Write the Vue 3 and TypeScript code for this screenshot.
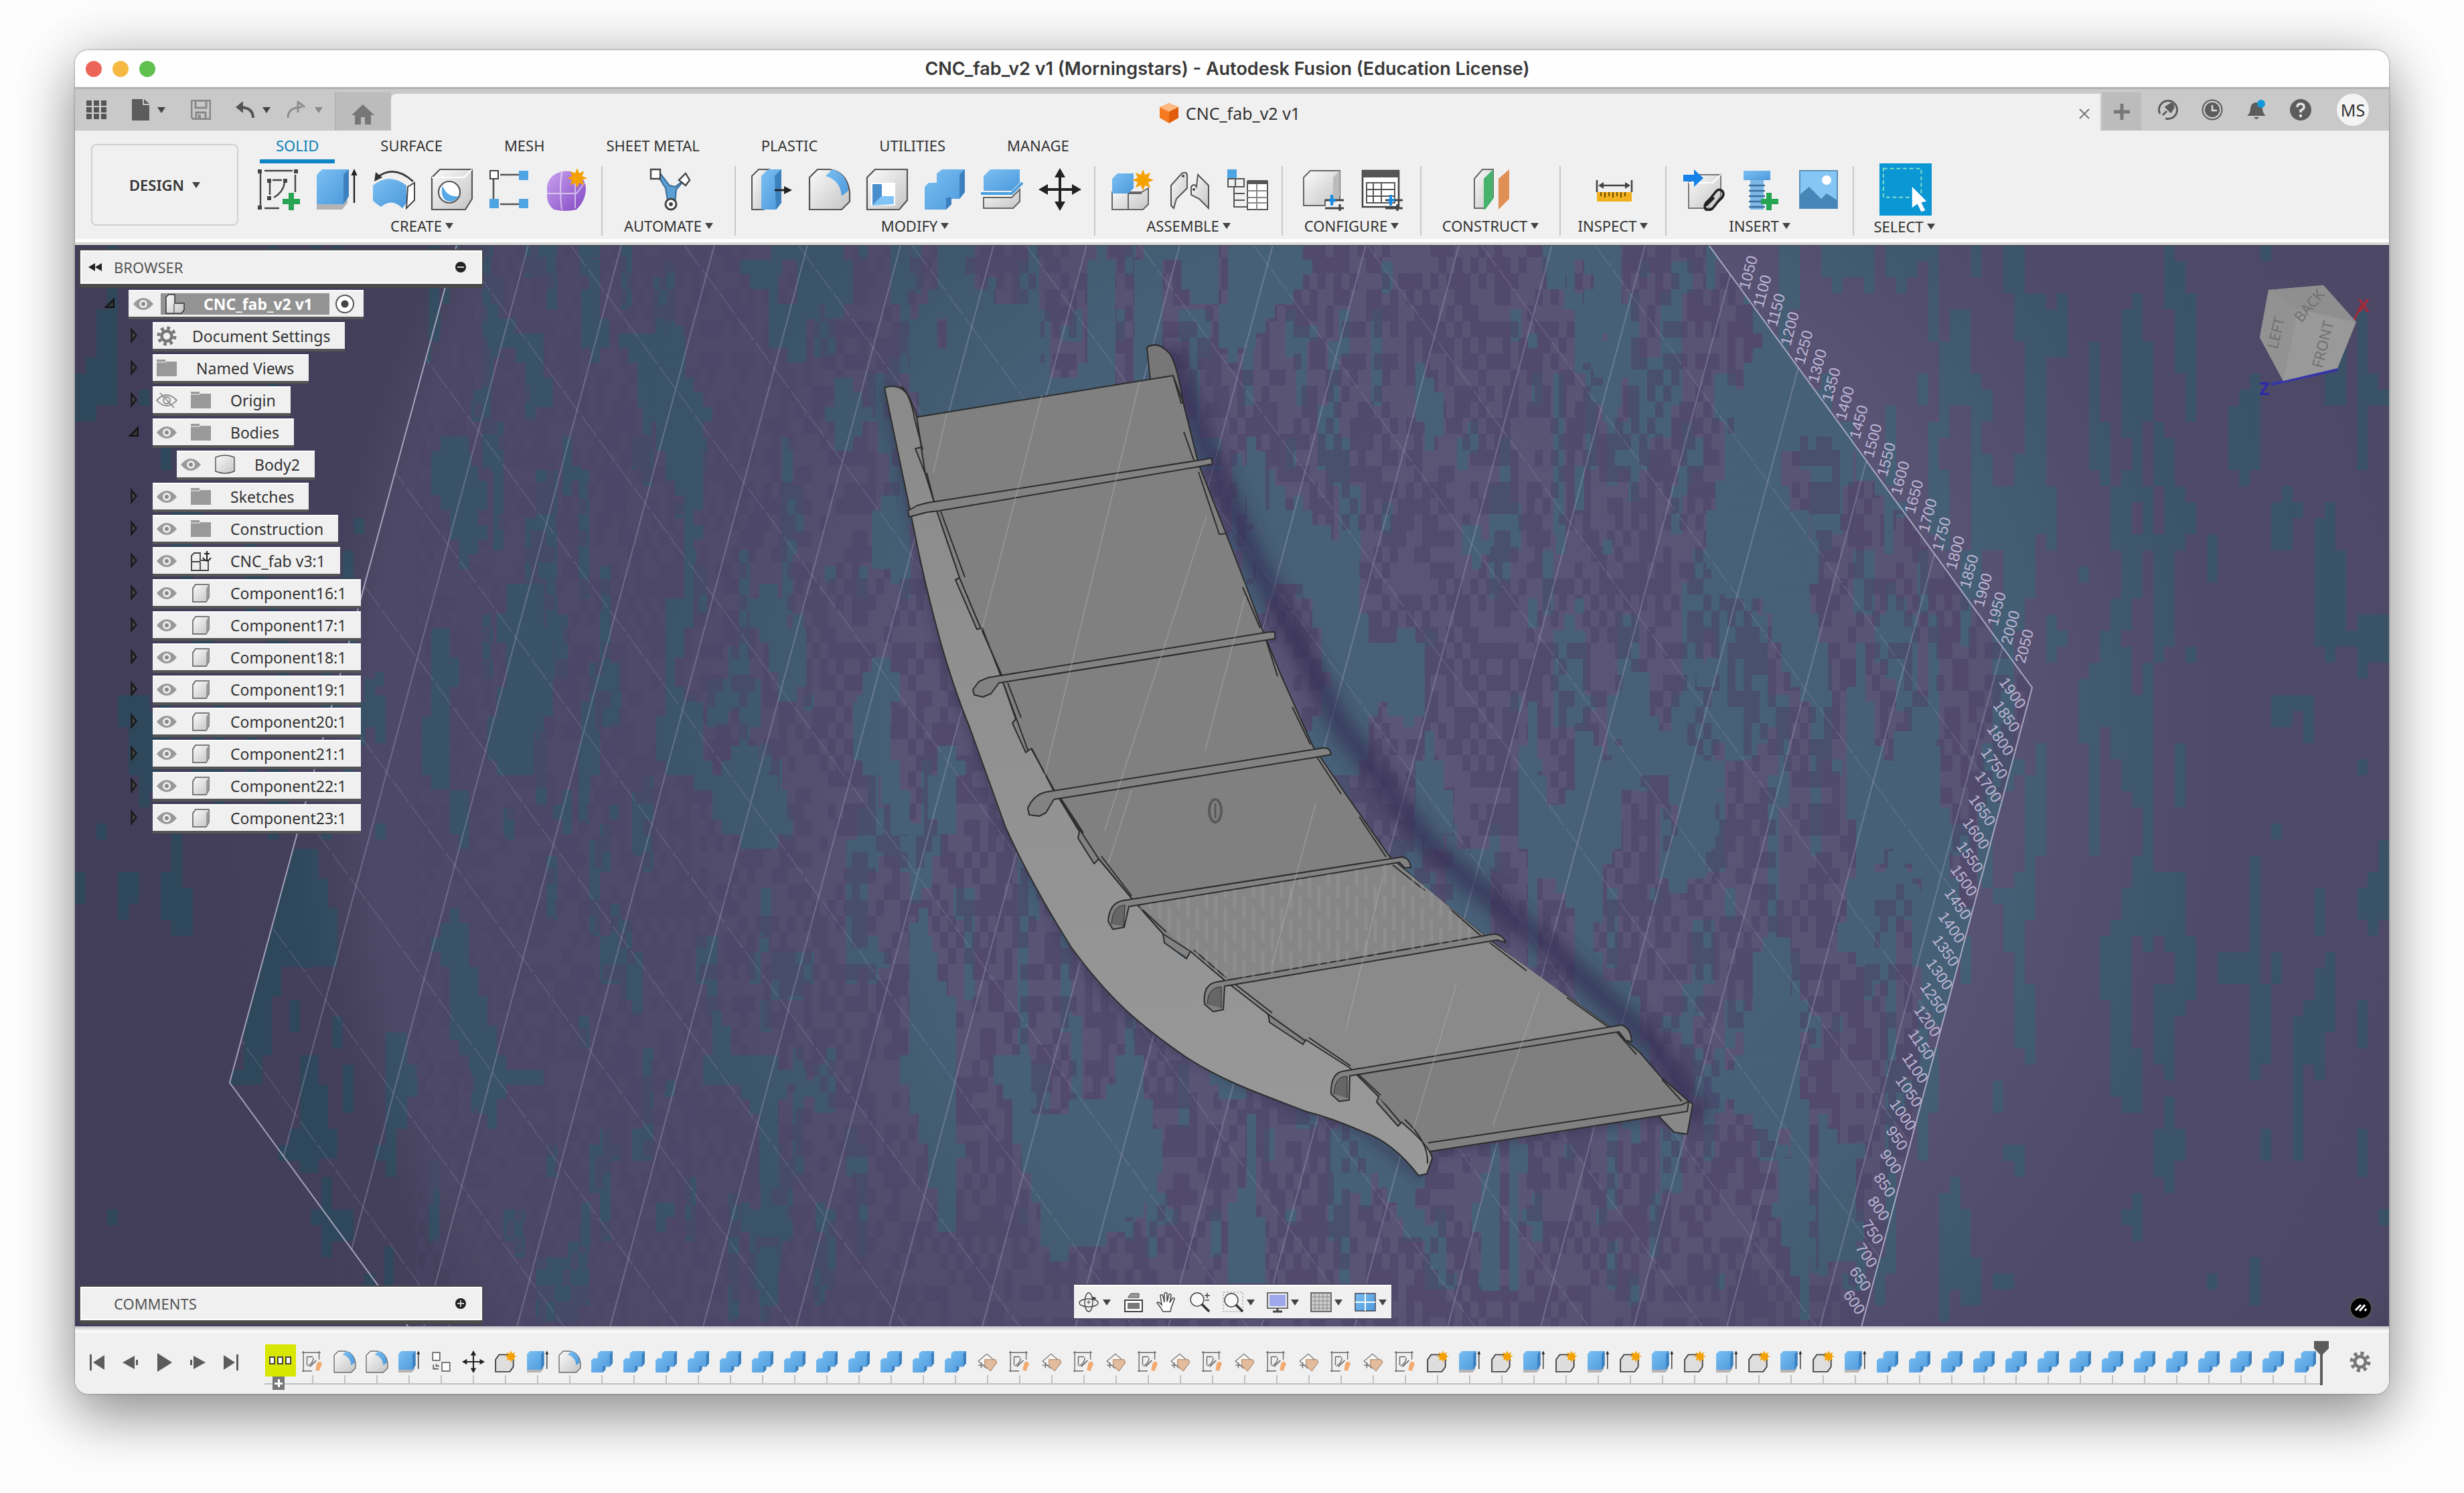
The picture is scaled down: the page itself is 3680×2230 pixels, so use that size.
<script setup lang="ts">
interface TreeRow { label: string; depth: number; expander: 'open' | 'closed' | 'none'; eye: 'on' | 'off' | 'none'; icon: string }
interface Group { label: string; width: number; icons: string[] }

const tabs = ['SOLID', 'SURFACE', 'MESH', 'SHEET METAL', 'PLASTIC', 'UTILITIES', 'MANAGE']

const groups: Group[] = [
  { label: 'CREATE', width: 538, icons: ['sketch-new', 'extrude', 'revolve', 'hole', 'pattern', 'form'] },
  { label: 'AUTOMATE', width: 199, icons: ['automate'] },
  { label: 'MODIFY', width: 537, icons: ['presspull', 'fillet', 'shell', 'combine', 'split', 'move'] },
  { label: 'ASSEMBLE', width: 280, icons: ['newcomp', 'joint', 'bom'] },
  { label: 'CONFIGURE', width: 207, icons: ['config', 'configtable'] },
  { label: 'CONSTRUCT', width: 208, icons: ['plane'] },
  { label: 'INSPECT', width: 158, icons: ['measure'] },
  { label: 'INSERT', width: 280, icons: ['insert', 'bolt', 'picture'] },
  { label: 'SELECT', width: 150, icons: ['select'] },
]

const tree: TreeRow[] = [
  { label: 'Document Settings', depth: 1, expander: 'closed', eye: 'none', icon: 'gear' },
  { label: 'Named Views', depth: 1, expander: 'closed', eye: 'none', icon: 'folder' },
  { label: 'Origin', depth: 1, expander: 'closed', eye: 'off', icon: 'folder' },
  { label: 'Bodies', depth: 1, expander: 'open', eye: 'on', icon: 'folder' },
  { label: 'Body2', depth: 2, expander: 'none', eye: 'on', icon: 'body' },
  { label: 'Sketches', depth: 1, expander: 'closed', eye: 'on', icon: 'folder' },
  { label: 'Construction', depth: 1, expander: 'closed', eye: 'on', icon: 'folder' },
  { label: 'CNC_fab v3:1', depth: 1, expander: 'closed', eye: 'on', icon: 'anchored' },
  ...Array.from({ length: 8 }, (_, i): TreeRow => ({
    label: `Component${16 + i}:1`, depth: 1, expander: 'closed', eye: 'on', icon: 'component',
  })),
]

const repeat = (items: string[], n: number): string[] => Array.from({ length: n }, () => items).flat()
const timeline: string[] = [
  'tl-group', 'tl-sketch', 'fillet', 'fillet', 'extrude', 'tl-copy', 'move', 'tl-comp', 'extrude', 'fillet',
  ...repeat(['combine'], 12),
  ...repeat(['tl-plane', 'tl-sketch'], 7),
  ...repeat(['tl-comp', 'extrude'], 7),
  ...repeat(['combine'], 14),
]

const navTools = [
  { name: 'Orbit', icon: 'nav-orbit', menu: true },
  { name: 'Look at', icon: 'nav-look', menu: false },
  { name: 'Pan', icon: 'nav-hand', menu: false },
  { name: 'Zoom', icon: 'nav-zoom', menu: false },
  { name: 'Fit', icon: 'nav-fit', menu: true },
  { name: 'Display settings', icon: 'nav-display', menu: true },
  { name: 'Grid and snaps', icon: 'nav-grid', menu: true },
  { name: 'Viewports', icon: 'nav-views', menu: true },
]

// Scale labels along the two visible borders of the work plane.
const upperScale = Array.from({ length: 21 }, (_, k) => ({ value: 2050 - 50 * k, x: 3023 - 20.6 * k, y: 965 - 27.9 * k }))
const lowerScale = Array.from({ length: 27 }, (_, k) => ({ value: 1900 - 50 * k, x: 3006 - 9.1 * k, y: 1035 + 35 * k }))

// Work plane grid: steep lines and shallow lines, both through the full viewport height.
const steep = Array.from({ length: 26 }, (_, k) => { const x = 1345 + 139 * (k - 8); return `M${x} 366L${x - 434} 1982` }).join('')
const shallow = Array.from({ length: 20 }, (_, k) => { const x = 2552 - 170 * (k + 1); return `M${x} 366L${x + 1181} 1982` }).join('')

// Seeded value noise gives the mottled backdrop the same look on every load.
const hash = (x: number, y: number): number => {
  let h = (x * 374761393 + y * 668265263) | 0
  h = Math.imul(h ^ (h >>> 13), 1274126177)
  return ((h ^ (h >>> 16)) >>> 0) / 4294967295
}
const noise = (x: number, y: number): number => {
  const xi = Math.floor(x), yi = Math.floor(y)
  const u = x - xi, v = y - yi
  const a = hash(xi, yi) * (1 - u) + hash(xi + 1, yi) * u
  const b = hash(xi, yi + 1) * (1 - u) + hash(xi + 1, yi + 1) * u
  return a * (1 - v) + b * v
}
const cells = (w: number, h: number, x1: number, x2: number, y1: number, y2: number, hit: (x: number, y: number) => boolean): string => {
  let d = ''
  for (let x = x1; x < x2; x += w) {
    let start = -1
    for (let y = y1; y <= y2; y += h) {
      const on = y < y2 && hit(x, y)
      if (on && start < 0) start = y
      if (!on && start >= 0) { d += `M${x} ${start}h${w}V${y}h-${w}z`; start = -1 }
    }
  }
  return d
}
const checks = cells(12, 24, 0, 480, 0, 480, (x, y) => hash(x + 7, y + 3) + ((x / 12 + y / 24) % 2 ? 0.3 : 0) > 0.66)
const patches = cells(14, 22, 112, 3568, 366, 1982, (x, y) => {
  const t = noise((x - y * 0.2) / 100 + 40, y / 190) * 0.5 + noise(x / 38, y / 100 + 9) * 0.5
  const d = Math.hypot((x - 2150) / 1500, (y - 1150) / 1500)
  return t > 0.54 + d * 0.07
})
const strips = cells(16, 24, 112, 3568, 366, 1982, (x, y) => {
  const t = noise(x / 20 + 5, y / 95 + 2) * 0.68 + noise((x - y * 0.2) / 150, y / 260 + 30) * 0.32
  return t > (x < 700 ? 0.72 : 0.63)
})
const bars = [
  'M1385 751L1800 686L1809 684L1811 693L1785 698L1402 763L1385 765L1358 772L1356 763L1370 755Z',
  'M1476 1012L1895 944L1904 944L1904 954L1492 1020L1480 1036L1468 1041L1455 1038L1453 1030L1462 1018Z',
  'M1562 1183L1977 1117Q1987 1117 1988 1127L1972 1130L1574 1194L1562 1214L1552 1219L1537 1217L1535 1207Q1544 1187 1562 1183Z',
  'M1678 1345L2094 1280Q2106 1282 2107 1296L2098 1296L2090 1288L1686 1354L1679 1385L1662 1388L1655 1376Q1657 1348 1678 1345Z',
  'M1816 1467L2232 1395Q2244 1396 2249 1408L2236 1404L1829 1473L1827 1508L1812 1511L1799 1500Q1796 1471 1816 1467Z',
  'M2006 1600L2422 1531Q2436 1536 2437 1556L2428 1554L2418 1541L2016 1607L2015 1643L2000 1645L1988 1634Q1987 1603 2006 1600Z',
]
</script>

<template>
  <svg class="defs" aria-hidden="true">
    <defs>
      <linearGradient id="blue" x1="0" y1="0" x2="1" y2="1"><stop offset="0" stop-color="#7cc0f2" /><stop offset="1" stop-color="#4b98dc" /></linearGradient>
      <linearGradient id="grey" x1="0" y1="0" x2="1" y2="1"><stop offset="0" stop-color="#fbfbfb" /><stop offset="1" stop-color="#c4c4c4" /></linearGradient>
      <linearGradient id="violet" x1="0" y1="0" x2="1" y2="1"><stop offset="0" stop-color="#c9a3ee" /><stop offset="1" stop-color="#8247c4" /></linearGradient>
    </defs>
    <symbol id="star" viewBox="0 0 16 16"><path d="M8 0l1.6 4.1L13.600 2.400 11.900 6.400 16 8l-4.100 1.600 1.700 4-4-1.700L8 16l-1.600-4.100-4 1.700 1.700-4L0 8l4.100-1.600-1.700-4 4 1.700z" fill="#f5a100" /></symbol>
    <symbol id="sketch-new" viewBox="0 0 32 32"><path d="M2 4v24M5 2h21M28 5v13M5 30h11M11 9h7M9 11v9M20 11q-1 7-8 11" fill="none" stroke="#444" stroke-width="1.200" /><path d="M0 1h3v3H0zM27 1h3v3h-3zM0 28h3v3H0zM7 8h3v3H7zM19 8h3v3h-3zM7 21h3v3H7z" fill="#444" /><path d="M23 18.500h4v4.500h4.500v4H27v4.500h-4V27h-4.500v-4H23z" fill="#27a454" /></symbol>
    <symbol id="extrude" viewBox="0 0 32 32"><path d="M1 27l3-2h17l3-5v6l-4 5H1z" fill="#b4b4b4" /><path d="M1 5l4-4h20v20l-4 6H1z" fill="url(#blue)" /><path d="M21 5l4-4v20l-4 6z" fill="#3c80bd" /><path d="M29 26V5" stroke="#222" stroke-width="1.200" /><path d="M29 0.500l2.300 5h-4.600z" fill="#222" /></symbol>
    <symbol id="revolve" viewBox="0 0 32 32"><path d="M0 13q12-10 25 0v13l-3 4q-8-8-16-1-6-4-6-5z" fill="url(#blue)" /><path d="M26 14l5-3v13l-6 6z" fill="#fff" stroke="#444" /><path d="M3 7q13-10 27 3" fill="none" stroke="#333" stroke-width="1.300" /><path d="M1 10l1-7 5 4z" fill="#333" /></symbol>
    <symbol id="hole" viewBox="0 0 32 32"><path d="M1 7l6-6h24v22l-5 8H1z" fill="url(#grey)" stroke="#555" stroke-width="1.100" /><path d="M1 7h24l6-6" fill="none" stroke="#fff" /><circle cx="14" cy="18" r="8" fill="#fff" stroke="#555" stroke-width="1.100" /><path d="M9 13q3 9 12 8-4 6-10 3-4-4-2-11z" fill="#58a9e8" /></symbol>
    <symbol id="pattern" viewBox="0 0 32 32"><path d="M4 8v17M9 5h14M9 27h14" stroke="#555" stroke-width="1.300" /><path d="M1.500 2h6v6h-6z" fill="#fff" stroke="#444" /><path d="M23 2h7v7h-7zM1 23h7v7H1zM23 23h7v7h-7z" fill="#4fa4e4" /></symbol>
    <symbol id="form" viewBox="0 0 32 32"><path d="M8 4q8-4 16 1 6 4 6 10 0 9-7 16-8 2-17 0-5-4-5-10V14Q2 7 8 4z" fill="url(#violet)" /><path d="M1 19h22l6-8M12 3q-2 14 0 28M22 8v22" fill="none" stroke="#fff" stroke-opacity=".55" /><use href="#star" x="16" y="0" width="15" height="15" /></symbol>
    <symbol id="automate" viewBox="0 0 32 32"><path d="M6 4l7 11 2 12h5l1-11 6-7-7 5-4-1-7-9z" fill="#5b9fd4" stroke="#3a6a94" /><path d="M2 1h7v7H2zM28 4l3 5-3 4-5-4z" fill="#fff" stroke="#444" stroke-width="1.200" /><circle cx="17" cy="27" r="4" fill="#fff" stroke="#444" stroke-width="1.500" /><circle cx="17" cy="27" r="1.500" fill="#444" /></symbol>
    <symbol id="presspull" viewBox="0 0 32 32"><path d="M1 6l5-5h8v25l-4 5H1z" fill="url(#grey)" stroke="#555" /><path d="M8 6l5-5h10v25l-4 5H8z" fill="url(#blue)" /><path d="M18 6l5-5v25l-4 5z" fill="#3c80bd" /><path d="M18 16.500h8" stroke="#222" stroke-width="1.500" /><path d="M31 16.500l-6-3v6z" fill="#222" /></symbol>
    <symbol id="fillet" viewBox="0 0 32 32"><path d="M1 7l6-6h9q13 2 15 17v7l-6 6H1z" fill="url(#grey)" stroke="#555" stroke-width="1.100" /><path d="M13 6l5-5q11 3 12 16l-5 4Q24 9 13 6z" fill="url(#blue)" /></symbol>
    <symbol id="shell" viewBox="0 0 32 32"><path d="M1 7l6-6h24v23l-6 7H1z" fill="url(#grey)" stroke="#555" stroke-width="1.100" /><path d="M4 11h18v17H4z" fill="#fff" /><path d="M5 12h7v9l-7 7z" fill="#4a8fcd" /><path d="M5 28l7-7h9v6z" fill="#7fc4f5" /></symbol>
    <symbol id="combine" viewBox="0 0 32 32"><path d="M1 14l3-3h6V4l4-3h17v17l-4 5h-6v4l-4 4H1z" fill="url(#blue)" /><path d="M27 5l4-4v17l-4 5zM17 22h4v5l-4 4z" fill="#3c80bd" /></symbol>
    <symbol id="split" viewBox="0 0 32 32"><path d="M2 6l5-5h22v10l-6 6H2z" fill="url(#blue)" /><path d="M2 22h21l6-6v9l-5 5H2z" fill="url(#grey)" stroke="#666" /><path d="M0 19h23l8-8" fill="none" stroke="#4a9fe0" stroke-width="2" /></symbol>
    <symbol id="move" viewBox="0 0 32 32"><path d="M16 5v22M5 16h22" stroke="#222" stroke-width="2" /><path d="M16 0l4 7h-8zM16 32l4-7h-8zM0 16l7-4v8zM32 16l-7-4v8z" fill="#222" /></symbol>
    <symbol id="newcomp" viewBox="0 0 32 32"><path d="M1 18h22l5-3v12l-4 4H1z" fill="url(#grey)" stroke="#666" /><path d="M13 19v12M13 19h10" stroke="#666" /><path d="M1 8l4-4h12v11l-4 4H1z" fill="url(#blue)" /><use href="#star" x="16" y="1" width="16" height="16" /></symbol>
    <symbol id="joint" viewBox="0 0 32 32"><path d="M2 13l8-9q4-2 4 2v9l-8 8-2 7-2-2z" fill="url(#grey)" stroke="#555" /><path d="M17 14q2-3 4 0l1-9 8 8v17l-7-7-6-3z" fill="url(#grey)" stroke="#555" /><circle cx="11" cy="6" r="1" fill="#444" /><circle cx="19" cy="16" r="1" fill="#444" /></symbol>
    <symbol id="bom" viewBox="0 0 32 32"><path d="M1 1h7v7H1z" fill="#4fa4e4" /><path d="M1.500 8h12v6h-12zM7 8v6M6 14v15h10M6 19h8M6 24h8" fill="none" stroke="#555" /><path d="M16 10h15v21H16z" fill="#fff" stroke="#555" /><path d="M16 9h15v3H16z" fill="#555" /><path d="M16 17h15M16 22h15M16 26h15M23 12v19" stroke="#888" /></symbol>
    <symbol id="config" viewBox="0 0 32 32"><path d="M1 7l5-5h22v22H17v4H1z" fill="url(#grey)" stroke="#666" /><path d="M23 7l5-5v19l-5 6z" fill="#bbb" /><path d="M17 24h14M17 30h14M28 27v5" stroke="#444" stroke-width="1.600" /><path d="M22 20v8M20 24h5" stroke="#188be0" stroke-width="2" /></symbol>
    <symbol id="configtable" viewBox="0 0 32 32"><path d="M2 2h27v27H2z" fill="#fff" stroke="#444" stroke-width="1.300" /><path d="M2 2h27v5H2z" fill="#555" /><path d="M5 11h21v15H5zM5 16h21M5 21h21M10 11v15M16 11v15" fill="none" stroke="#555" /><path d="M19 24h13M19 30h13M28 27v5" stroke="#444" stroke-width="1.600" /><path d="M23 20v8M21 24h5" stroke="#188be0" stroke-width="2" /></symbol>
    <symbol id="plane" viewBox="0 0 32 32"><path d="M3 8l6-7h8v21l-6 8H3z" fill="url(#grey)" stroke="#666" /><path d="M10 8l7-7v22l-6 8h-1z" fill="#47b26b" /><path d="M21 8l8-7v22l-8 8z" fill="#e08f55" /></symbol>
    <symbol id="measure" viewBox="0 0 32 32"><path d="M3 9v9M29 9v9M5 13h22" stroke="#444" stroke-width="1.300" /><path d="M4 13l4-2.500v5zM28 13l-4-2.500v5z" fill="#444" /><path d="M3 18h26v7H3z" fill="#f2b01e" /><path d="M6 18v3M9 18v4M12 18v3M15 18v4M18 18v3M21 18v4M24 18v3" stroke="#6b4c00" /></symbol>
    <symbol id="insert" viewBox="0 0 32 32"><path d="M5 11l6-6h18v16l-6 9H5z" fill="url(#grey)" stroke="#777" /><path d="M5 11h18l6-6" fill="none" stroke="#fff" /><path d="M1 5h8V1l7 6.500L9 14v-4H1z" fill="#1482e6" /><path d="M21 23l4-5q2-3 5-1 2 2 0 5l-4 4M24 22l-6 6M23 21l-5 5q-2 3 0 5 3 1 5-1l4-5" fill="none" stroke="#222" stroke-width="1.800" /></symbol>
    <symbol id="bolt" viewBox="0 0 32 32"><path d="M3 2h20v7H3z" fill="url(#blue)" /><path d="M8 9h10v22H8z" fill="#7db8e6" /><path d="M7 13h12M7 17h12M7 21h12M7 25h12M7 29h12" stroke="#3a6d9a" stroke-width="1.300" /><path d="M20 18.500h4V23h5v4h-5v4.500h-4V27h-4v-4h4z" fill="#27a454" /></symbol>
    <symbol id="picture" viewBox="0 0 32 32"><path d="M2 2h28v28H2z" fill="#86c6f5" stroke="#5b8fb8" /><path d="M2 30V20l7-6 9 9 4-4 8 5v6z" fill="#4787b8" /><circle cx="22" cy="9" r="3.500" fill="#fff" /></symbol>
    <symbol id="select" viewBox="0 0 40 40"><path d="M0 0h40v40H0z" fill="#0b96d4" /><path d="M3 4h29v22H3z" fill="none" stroke="#7fe0c8" stroke-width="1" stroke-dasharray="3 2" /><path d="M25 18v16l4-3 3 6 3-1-3-6 4-1z" fill="#fff" /></symbol>
    <symbol id="gear" viewBox="0 0 32 32"><circle cx="16" cy="16" r="12" fill="none" stroke="#777" stroke-width="5" stroke-dasharray="4.700 4.720" /><circle cx="16" cy="16" r="7.500" fill="none" stroke="#777" stroke-width="4.500" /></symbol>
    <symbol id="folder" viewBox="0 0 32 32"><path d="M1 3h13v3h17v22H1z" fill="#999" /><path d="M1 7h13l2-2" fill="none" stroke="#d6d6d6" stroke-width="1.500" /></symbol>
    <symbol id="eye" viewBox="0 0 32 32"><path d="M1 16Q16-2 31 16 16 34 1 16z" fill="#999" /><circle cx="16" cy="16" r="6" fill="#eee" /><circle cx="16" cy="16" r="3" fill="#888" /></symbol>
    <symbol id="eye-off" viewBox="0 0 32 32"><path d="M1 16Q16 0 31 16 16 32 1 16zM6 5l21 22" fill="none" stroke="#888" stroke-width="1.800" /><circle cx="16" cy="16" r="5" fill="none" stroke="#888" stroke-width="1.800" /></symbol>
    <symbol id="body" viewBox="0 0 32 32"><path d="M2 5q14-6 28 0v21q-14 6-28 0z" fill="url(#grey)" stroke="#555" stroke-width="1.500" /></symbol>
    <symbol id="component" viewBox="0 0 32 32"><path d="M4 9l4-6h20v19l-4 7H4z" fill="url(#grey)" stroke="#555" stroke-width="1.500" /><path d="M24 9l4-6v19l-4 7z" fill="#999" /></symbol>
    <symbol id="anchored" viewBox="0 0 32 32"><path d="M2 8l4-4h9v11h12v15H2zM2 17h13M15 17v13" fill="#eee" stroke="#444" stroke-width="1.800" /><path d="M25 1v15M21 5h8M19 11q6 9 12 0" fill="none" stroke="#222" stroke-width="2" /></symbol>
    <symbol id="assembly" viewBox="0 0 32 32"><path d="M2 6l4-4h9v13h14v10l-4 5H2z" fill="url(#grey)" stroke="#333" stroke-width="1.500" /><path d="M14 16v13" stroke="#333" /></symbol>
    <symbol id="tl-group" viewBox="0 0 46 48"><path d="M0 0h46v48H0z" fill="#d9e600" /><path d="M7 19h7v10H7zM19 19h7v10h-7zM31 19h7v10h-7z" fill="#fff" stroke="#444" stroke-width="2" /></symbol>
    <symbol id="tl-sketch" viewBox="0 0 32 32"><path d="M3 1v29M1 3h26M25 1v12M1 29h14M8 9v12M8 9h8M17 10q0 8-8 12" fill="none" stroke="#666" stroke-width="1.300" /><path d="M20 28l2-10q5-5 7 1l-4 10z" fill="#f2aa70" /><path d="M12 23l9-9" stroke="#666" stroke-width="1.500" /></symbol>
    <symbol id="tl-copy" viewBox="0 0 32 32"><path d="M4 3h10v11H4zM17 17h11v12H17z" fill="#fff" stroke="#666" stroke-width="1.600" /><path d="M5 20v6h7M9 19v3h4" fill="none" stroke="#555" stroke-width="1.600" /></symbol>
    <symbol id="tl-comp" viewBox="0 0 32 32"><path d="M2 13l5-7h20v17l-5 7H2z" fill="#dedede" stroke="#444" stroke-width="1.800" /><use href="#star" x="15" y="0" width="17" height="17" /></symbol>
    <symbol id="tl-plane" viewBox="0 0 32 32"><path d="M3 15L15 5l9 8-10 12z" fill="#f8f4f0" stroke="#777" stroke-width="1.200" /><path d="M12 13h15l2 4-9 12-8-7z" fill="#e3bb9d" stroke="#a5856c" /><path d="M7 17v8M3 21h8" stroke="#777" stroke-width="1.500" /></symbol>
    <symbol id="nav-orbit" viewBox="0 0 32 32"><ellipse cx="15" cy="17" rx="14" ry="6" fill="none" stroke="#444" stroke-width="1.400" /><ellipse cx="15" cy="16" rx="6" ry="14" fill="none" stroke="#444" stroke-width="1.400" /><path d="M12 16h6M15 13v6M21 8l5 2-4 3z" stroke="#444" fill="#444" /></symbol>
    <symbol id="nav-look" viewBox="0 0 32 32"><path d="M3 13h26v17H3z" fill="#fff" stroke="#444" stroke-width="2" /><path d="M7 17h18v9H7z" fill="#777" /><path d="M8 8l4-5h12v6H8z" fill="#999" stroke="#555" /></symbol>
    <symbol id="nav-hand" viewBox="0 0 32 32"><path d="M11 30q-3-6-9-13 2-3 7 3L7 6q2-3 4 1l2 9V3q3-3 4 0v12l3-11q3-1 3 2l-2 11 4-7q3-1 3 1l-5 14-1 5z" fill="#fff" stroke="#444" stroke-width="1.500" /></symbol>
    <symbol id="nav-zoom" viewBox="0 0 32 32"><circle cx="12" cy="12" r="10" fill="#f8f8f8" stroke="#444" stroke-width="1.500" /><path d="M19 19l11 11" stroke="#333" stroke-width="3.500" /><path d="M27 2v8M23 6h8M24 13h6" stroke="#444" stroke-width="1.500" /></symbol>
    <symbol id="nav-fit" viewBox="0 0 32 32"><path d="M1 1h29v29H1z" fill="none" stroke="#999" stroke-dasharray="3 2" /><circle cx="13" cy="13" r="10" fill="#f8f8f8" stroke="#444" stroke-width="1.500" /><path d="M20 20l10 10" stroke="#333" stroke-width="3.500" /></symbol>
    <symbol id="nav-display" viewBox="0 0 32 32"><path d="M1 2h30v23H1z" fill="#eee" stroke="#444" stroke-width="1.500" /><path d="M4 5h24v17H4z" fill="#9fa8ea" /><path d="M9 30h14M16 25v5" stroke="#444" stroke-width="3" /></symbol>
    <symbol id="nav-grid" viewBox="0 0 32 32"><path d="M1 2h30v28H1z" fill="#ccc" stroke="#444" stroke-width="1.500" /><path d="M7 2v28M13 2v28M19 2v28M25 2v28M1 8h30M1 14h30M1 20h30M1 25h30" stroke="#888" /></symbol>
    <symbol id="nav-views" viewBox="0 0 32 32"><path d="M1 3h30v26H1z" fill="url(#blue)" stroke="#445" stroke-width="1.500" /><path d="M16 3v26M1 16h30" stroke="#fff" stroke-width="2" /></symbol>
  </svg>

  <div class="page">
    <main class="window">
      <header class="titlebar">
        <div class="lights"><i class="red" /><i class="amber" /><i class="green" /></div>
        <h1>CNC_fab_v2 v1 (Morningstars) - Autodesk Fusion (Education License)</h1>
      </header>

      <div class="tabbar">
        <div class="quick">
          <button aria-label="Data panel"><svg width="30" height="30" viewBox="0 0 30 30"><path d="M0 1h8v8H0zM11 1h8v8h-8zM22 1h8v8h-8zM0 11h8v8H0zM11 11h8v8h-8zM22 11h8v8h-8zM0 21h8v8H0zM11 21h8v8h-8zM22 21h8v8h-8z" fill="#555" /></svg></button>
          <button class="file" aria-label="File"><svg width="26" height="32" viewBox="0 0 26 32"><path d="M0 0h16v9h10v23H0z" fill="#5c5c5c" /><path d="M18 0l8 7h-8z" fill="#5c5c5c" /></svg><span class="caret" /></button>
          <button class="save" aria-label="Save"><svg width="30" height="30" viewBox="0 0 30 30"><path d="M1 1h28v28H4l-3-3z" fill="none" stroke="#888" stroke-width="3" /><path d="M7 1h16v11H7zM8 19h14v10H8z" fill="none" stroke="#888" stroke-width="3" /><path d="M11 22h4v7h-4z" fill="#888" /></svg></button>
          <button class="undo" aria-label="Undo"><svg width="28" height="26" viewBox="0 0 28 26"><path d="M26 25Q26 9 5 9" fill="none" stroke="#555" stroke-width="4" /><path d="M0 9l11-9v18z" fill="#555" /></svg><span class="caret" /></button>
          <button class="redo" aria-label="Redo"><svg width="28" height="26" viewBox="0 0 28 26"><path d="M2 25Q2 9 23 9" fill="none" stroke="#8d8d8d" stroke-width="3" /><path d="M27 9L17 1v16" fill="none" stroke="#8d8d8d" stroke-width="3" /></svg><span class="caret dim" /></button>
        </div>
        <button class="home" aria-label="Home"><svg width="34" height="30" viewBox="0 0 34 30"><path d="M17 0l17 16h-5v14h-9V19h-6v11H5V16H0z" fill="#777" /></svg></button>
        <div class="doctab">
          <div class="doclabel"><svg width="30" height="32" viewBox="0 0 30 32"><path d="M1 7l14-6 14 6v16l-14 8L1 23z" fill="#f47b20" /><path d="M1 7l14-6 14 6-14 7z" fill="#fdb883" /><path d="M15 14l14-7v16l-14 8z" fill="#e05e0a" /></svg><span>CNC_fab_v2 v1</span></div>
          <button class="close" aria-label="Close tab"><svg width="16" height="16" viewBox="0 0 16 16"><path d="M1 1l14 14M15 1L1 15" stroke="#777" stroke-width="2" /></svg></button>
        </div>
        <button class="plus" aria-label="New tab"><svg width="24" height="24" viewBox="0 0 24 24"><path d="M12 0v24M0 12h24" stroke="#777" stroke-width="5" /></svg></button>
        <div class="account">
          <button aria-label="Extensions"><svg width="32" height="32" viewBox="0 0 32 32"><circle cx="16" cy="16" r="13.500" fill="none" stroke="#5c5c5c" stroke-width="3" stroke-dasharray="74 11" stroke-dashoffset="-36" /><path d="M8 24l6-6M13 12l7 7 4-6-5-5zM20 6l5 5" fill="#5c5c5c" stroke="#5c5c5c" stroke-width="3" /></svg></button>
          <button aria-label="Job status"><svg width="32" height="32" viewBox="0 0 32 32"><circle cx="16" cy="16" r="14.500" fill="none" stroke="#5c5c5c" stroke-width="2" /><circle cx="16" cy="16" r="11" fill="#5c5c5c" /><path d="M16 9v8h7" fill="none" stroke="#ddd" stroke-width="2.500" /></svg></button>
          <button aria-label="Notifications"><svg width="32" height="32" viewBox="0 0 32 32"><path d="M2 25q5-4 5-11 1-9 9-9t9 9q0 7 5 11zM12 27h8q-4 6-8 0z" fill="#5c5c5c" /><circle cx="23" cy="7" r="6" fill="#1498dc" /></svg></button>
          <button aria-label="Help"><svg width="32" height="32" viewBox="0 0 32 32"><circle cx="16" cy="16" r="16" fill="#5c5c5c" /><path d="M11 12q0-5 5-5t5 5q0 3-5 5v3" fill="none" stroke="#e4e4e4" stroke-width="3.500" /><circle cx="16" cy="25" r="2.200" fill="#e4e4e4" /></svg></button>
          <button class="avatar">MS</button>
        </div>
      </div>

      <div class="ribbon">
        <button class="workspace">DESIGN<span class="caret" /></button>
        <div class="tools">
          <nav class="tabs"><button v-for="(t, i) in tabs" :key="t" :class="{ active: i === 0 }">{{ t }}</button></nav>
          <div class="groups">
            <section v-for="g in groups" :key="g.label" class="group" :style="{ width: g.width + 'px' }">
              <div class="icons">
                <button v-for="ic in g.icons" :key="ic" :class="['tool', ic]" :aria-label="ic"><svg><use :href="'#' + ic" /></svg></button>
              </div>
              <button class="menu">{{ g.label }}<span class="caret" /></button>
            </section>
          </div>
        </div>
      </div>

      <div class="viewport">
        <svg class="scene" viewBox="112 366 3456 1616" preserveAspectRatio="xMidYMid slice">
          <defs>
            <radialGradient id="bg" gradientUnits="userSpaceOnUse" cx="2150" cy="1150" r="2000">
              <stop offset="0" stop-color="#5b5577" /><stop offset=".4" stop-color="#595374" /><stop offset=".58" stop-color="#4f4a69" /><stop offset=".8" stop-color="#4c4865" /><stop offset=".84" stop-color="#443f5b" /><stop offset="1" stop-color="#423d59" />
            </radialGradient>
            <radialGradient id="patch" gradientUnits="userSpaceOnUse" cx="2150" cy="1150" r="2000">
              <stop offset="0" stop-color="#486179" /><stop offset=".4" stop-color="#466077" /><stop offset=".6" stop-color="#3b5367" /><stop offset=".8" stop-color="#3a5266" /><stop offset=".86" stop-color="#2f475b" /><stop offset="1" stop-color="#2f475b" />
            </radialGradient>
            <linearGradient id="side" x1="0" y1="0" x2="0" y2="1"><stop offset="0" stop-color="#8a8a8a" /><stop offset="1" stop-color="#999" /></linearGradient>
            <pattern id="checks" width="480" height="480" patternUnits="userSpaceOnUse"><path :d="checks" fill="#4b4468" fill-opacity=".6" /></pattern>
            <clipPath id="planeclip"><path d="M682 366H2552L3035 1027L2780 1982H610L343 1617Z" /></clipPath>
            <filter id="soft"><feGaussianBlur stdDeviation="12" /></filter>
            <filter id="tiny"><feGaussianBlur stdDeviation="7" /></filter>
            <clipPath id="seg5"><path d="M1697 1353L2085 1289L2219 1399L1833 1466Z" /></clipPath>
          </defs>
          <path d="M112 366h3456v1616H112z" fill="url(#bg)" />
          <path :d="strips" fill="url(#patch)" />
          <g clip-path="url(#planeclip)">
            <path d="M620 366H3040V1982H620z" fill="url(#checks)" />
            <path :d="patches" fill="url(#patch)" />
            <path :d="steep" fill="none" stroke="#b9b4d2" stroke-opacity=".32" stroke-width="2" />
            <path :d="shallow" fill="none" stroke="#b9b4d2" stroke-opacity=".16" stroke-width="2" stroke-dasharray="40 5" />
          </g>
          <path d="M682 366L343 1617L610 1982M2552 366L3035 1027L2780 1982" fill="none" stroke="#cfc9e2" stroke-opacity=".7" stroke-width="2" />
          <g class="scale">
            <text v-for="s in upperScale" :key="'u' + s.value" :transform="`translate(${s.x} ${s.y}) rotate(-75)`">{{ s.value }}</text>
            <text v-for="s in lowerScale" :key="'l' + s.value" :transform="`translate(${s.x} ${s.y}) rotate(55)`">{{ s.value }}</text>
          </g>

          <path d="M1745 520L1790 640L1870 830L2000 1080L2140 1270L2320 1420L2470 1560L2540 1670" fill="none" stroke="#352c55" stroke-opacity=".7" stroke-width="34" filter="url(#soft)" />
          <path d="M1321 579L1362 776L1405 960L1448 1086L1502 1236L1600 1415L1669 1502L1744 1560L1850 1618L1950 1660L2037 1691L2119 1756L2139 1720L2520 1662" fill="none" stroke="#383450" stroke-opacity=".5" stroke-width="12" filter="url(#tiny)" />
          <path d="M1369 640L1382 708L1400 766L1433 863L1494 1008L1535 1120L1576 1183L1641 1283L1691 1343L1737 1395L1778 1421L1831 1466L1894 1515L1950 1555L2016 1595L2059 1638L2091 1676L2125 1708" fill="none" stroke="#828282" stroke-width="20" />
          <g stroke="#2c2c2c" stroke-width="2" stroke-linejoin="round">
            <path d="M1713 519Q1729 508 1747 528Q1758 545 1767 601L1752 562L1718 568Z" fill="#777" />
            <path d="M2478 1668L2500 1691L2520 1694L2528 1649L2515 1640Z" fill="#888" />
            <path d="M1369 623L1752 561L1767 601L1790 693L1831 797L1862 877L1887 945L1913 1008L1961 1115L2009 1185L2075 1279L2131 1328L2219 1399L2284 1450L2341 1488L2409 1537L2450 1573L2481 1609L2522 1645L2520 1660L2135 1720L2091 1676L2059 1638L2016 1595L1950 1555L1894 1515L1831 1466L1778 1421L1737 1395L1691 1343L1641 1283L1576 1183L1535 1120L1494 1008L1433 863L1400 766L1382 708Z" fill="#808080" />
            <g stroke="none">
              <path d="M1697 1353L2085 1289L2219 1399L1833 1466Z" fill="#868686" />
              <path d="M1833 1470L2225 1405L2409 1537L2018 1599Z" fill="#8a8a8a" />
              <path d="M2018 1603L2412 1540L2515 1645L2133 1706Z" fill="#7f7f7f" />
            </g>
            <path d="M1321 579Q1350 570 1362 602Q1366 612 1369 623L1376 668L1367 670L1382 708L1400 766L1433 863L1427 866L1459 940L1467 938L1494 1008L1517 1074L1512 1080L1532 1124L1540 1118L1576 1183L1612 1242L1610 1252L1634 1290L1641 1283L1691 1343L1737 1395L1739 1408L1772 1432L1778 1421L1831 1466L1894 1515L1896 1527L1946 1560L1950 1553L2016 1595L2059 1638L2056 1646L2088 1682L2093 1676Q2136 1712 2139 1730L2131 1753L2119 1756Q2080 1706 2037 1691Q1990 1670 1950 1660C1900 1640 1830 1618 1770 1578C1700 1530 1655 1490 1600 1415Q1540 1320 1502 1236L1448 1086Q1425 1030 1405 960Q1380 870 1362 776Z" fill="url(#side)" />
            <path d="M1346 577Q1360 590 1366 626L1378 672M1384 706L1397 757M1405 764L1441 862M1466 940L1496 1008M1505 1020L1525 1072M1541 1118L1573 1180M1584 1192L1618 1244M1645 1279L1690 1338M1699 1352L1742 1392M1783 1419L1832 1461M1842 1468L1900 1513M1955 1550L2017 1592M2026 1602L2062 1636M2098 1672Q2134 1706 2132 1738M1752 561L1764 602L1767 601M1768 645L1784 690M1790 705L1821 798L1830 797M1856 877L1882 938M1890 953L1908 1010M1930 1056L1957 1112M1965 1128L2003 1186M2030 1220L2070 1280M2080 1292L2128 1330M2164 1356L2212 1398M2225 1408L2280 1450M2340 1490L2402 1534M2415 1542L2444 1575M2482 1612L2512 1645M2133 1707L2512 1650L2522 1645" fill="none" stroke-width="2" />
            <path v-for="b in bars" :key="b" :d="b" fill="#828282" stroke-width="2" />
            <path d="M1660 1380Q1662 1352 1680 1352L1678 1384M1803 1500Q1804 1474 1824 1474L1824 1506M1992 1634Q1994 1606 2012 1608L2012 1640" fill="#666" stroke-width="1" />
          </g>
          <g clip-path="url(#seg5)" stroke="#999" stroke-width="5" stroke-dasharray="34 14" stroke-opacity=".45"><path v-for="k in 38" :key="k" :d="`M${1690 + k * 14} ${1290 + (k % 3) * 17}v190`" /></g>
          <g stroke="#b4b4b4" stroke-opacity=".35" stroke-width="2"><path d="M1414 618L1394 706M1556 590L1466 942M1702 570L1560 1160M1860 890L1800 1120M1802 770L1650 1240M1965 1200L1900 1440M2065 1310L2010 1540M2175 1470L2110 1690M2300 1480L2230 1680M1690 1180L1655 1290" fill="none" /></g>
          <ellipse cx="1815" cy="1211" rx="9" ry="17" fill="none" stroke="#5a5a5a" stroke-width="4" /><path d="M1815 1200v22" stroke="#5a5a5a" stroke-width="3" />

          <g class="cube">
            <path d="M3516 478L3526 456" stroke="#a02b3b" stroke-width="3" /><path d="M3392 574L3410 570L3492 552" fill="none" stroke="#3535a8" stroke-width="4" />
            <path d="M3388 433L3470 426L3519 481L3491 550L3410 569L3375 504Z" fill="#999" />
            <path d="M3388 433L3470 426L3519 481L3432 462Z" fill="#8f8f8f" /><path d="M3388 433L3432 462L3410 569L3375 504Z" fill="#929292" />
            <text transform="translate(3448 456) rotate(-50)">BACK</text><text transform="translate(3398 497) rotate(-76)">LEFT</text><text transform="translate(3468 514) rotate(-76)">FRONT</text>
            <text class="x" x="3530" y="456">X</text><text class="z" x="3382" y="580">Z</text>
          </g>
        </svg>

        <aside class="browser">
          <div class="panel"><svg class="fold" width="20" height="12" viewBox="0 0 20 12"><path d="M0 6l10-6v12zM10 6l10-6v12z" fill="#222" /></svg><span>BROWSER</span><button aria-label="Minimize"><svg width="16" height="16" viewBox="0 0 16 16"><circle cx="8" cy="8" r="8" fill="#222" /><path d="M3 8h10" stroke="#ccc" stroke-width="2" /></svg></button></div>
          <ul class="tree">
            <li class="depth0"><svg class="exp" viewBox="0 0 16 16"><path d="M14 2v12H2z" fill="#333" stroke="#111" stroke-width="2" /></svg>
              <div class="row root"><svg class="ic"><use href="#eye" /></svg><span class="name"><svg class="ic"><use href="#assembly" /></svg><b>CNC_fab_v2 v1</b></span><input type="radio" checked aria-label="Activate CNC_fab_v2 v1"></div>
            </li>
            <li v-for="r in tree" :key="r.label" :class="'depth' + r.depth">
              <svg v-if="r.expander === 'closed'" class="exp" viewBox="0 0 16 28"><path d="M4 4l8 10-8 10z" fill="#4a4a4a" stroke="#1a1a1a" stroke-width="3" /></svg>
              <svg v-else-if="r.expander === 'open'" class="exp" viewBox="0 0 16 16"><path d="M14 2v12H2z" fill="#333" stroke="#111" stroke-width="2" /></svg>
              <span v-else class="exp" />
              <div class="row">
                <svg v-if="r.eye !== 'none'" class="ic"><use :href="r.eye === 'on' ? '#eye' : '#eye-off'" /></svg>
                <svg class="ic"><use :href="'#' + r.icon" /></svg><span :class="['text', r.icon]">{{ r.label }}</span>
              </div>
            </li>
          </ul>
        </aside>

        <div class="panel comments"><span>COMMENTS</span><button aria-label="Expand"><svg width="16" height="16" viewBox="0 0 16 16"><circle cx="8" cy="8" r="8" fill="#222" /><path d="M3 8h10M8 3v10" stroke="#ccc" stroke-width="2" /></svg></button></div>

        <div class="navbar"><button v-for="n in navTools" :key="n.name" :aria-label="n.name"><svg><use :href="'#' + n.icon" /></svg><span v-if="n.menu" class="caret" /></button></div>
        <button class="assist" aria-label="Assistant"><svg width="34" height="34" viewBox="0 0 34 34"><circle cx="17" cy="17" r="16" fill="#000" stroke="#555" stroke-width="2" /><path d="M9 20l8-8M15 21l8-9M23 21l2-3" stroke="#fff" stroke-width="3" /></svg></button>
      </div>

      <footer class="timeline">
        <div class="play">
          <button aria-label="Go to start"><svg viewBox="0 0 24 24"><path d="M1 0h3v24H1zM23 1v22L6 12z" /></svg></button>
          <button aria-label="Step back"><svg viewBox="0 0 24 24"><path d="M18 2v20L0 12zM20 8h3v8h-3z" /></svg></button>
          <button aria-label="Play"><svg viewBox="0 0 24 24"><path d="M2 -2v28l22-14z" /></svg></button>
          <button aria-label="Step forward"><svg viewBox="0 0 24 24"><path d="M6 2v20l18-10zM1 8h3v8H1z" /></svg></button>
          <button aria-label="Go to end"><svg viewBox="0 0 24 24"><path d="M20 0h3v24h-3zM1 1v22l17-11z" /></svg></button>
        </div>
        <div class="track">
          <div v-for="(t, i) in timeline" :key="i" :class="['step', { first: i === 0 }]"><svg><use :href="'#' + t" /></svg><i /></div>
          <svg class="marker" width="24" height="66" viewBox="0 0 24 66"><path d="M1 0h22v11l-9 9v46h-4V20L1 11z" fill="#5c5c5c" /></svg>
        </div>
        <button class="settings" aria-label="Timeline settings"><svg width="34" height="34"><use href="#gear" /></svg></button>
      </footer>
    </main>
  </div>
</template>

<style>
body { background: #fdfdfd; }
</style>

<style scoped>
.page { box-sizing: border-box; min-height: 100vh; padding: 75px 112px 148px; display: flex; font-family: "Noto Sans", "Open Sans", sans-serif; font-size: 22px; line-height: 30px; color: #333; }
.defs { position: absolute; width: 0; height: 0; }
.window { flex: 1; min-width: 0; display: flex; flex-direction: column; border-radius: 20px; overflow: hidden; background: #f0f0f0; box-shadow: 0 0 3px rgba(0, 0, 0, .45), 0 36px 84px rgba(0, 0, 0, .36), 0 0 90px rgba(0, 0, 0, .16); }
button { border: 0; padding: 0; background: none; font: inherit; color: inherit; display: flex; align-items: center; justify-content: center; }
svg { display: block; flex: none; }
.caret { width: 0; height: 0; border: 6px solid transparent; border-top: 9px solid #444; border-bottom: 0; }
.caret.dim { border-top-color: #8a8a8a; }

.titlebar { height: 55px; background: #fefefe; border-bottom: 3px solid #b0b0b0; display: grid; grid-template-columns: 1fr auto 1fr; align-items: center; }
.lights { display: flex; gap: 16px; padding-left: 16px; }
.lights i { width: 24px; height: 24px; border-radius: 50%; }
.red { background: #ed6559; }
.amber { background: #f5b944; }
.green { background: #5fc04f; }
h1 { margin: 0; padding-right: 14px; font: 600 27px/32px Inter, sans-serif; color: #383838; }

.tabbar { height: 62px; background: #c9c9c9; display: flex; align-items: stretch; }
.quick { width: 388px; display: flex; align-items: center; padding-left: 17px; box-sizing: border-box; }
.file { margin-left: 38px; gap: 12px; }
.save { margin-left: 38px; }
.undo { margin-left: 37px; gap: 12px; }
.redo { margin-left: 24px; gap: 14px; }
.home { width: 84px; padding-top: 8px; background: #bcbcbc; box-shadow: inset 2px 0 #b2b2b2; margin-top: 5px; }
.doctab { flex: 1; margin-top: 7px; margin-right: 3px; background: #f0f0f0; border-top-left-radius: 8px; display: flex; align-items: center; }
.doclabel { flex: 1; display: flex; align-items: center; justify-content: center; gap: 10px; padding-top: 2px; font-size: 25px; }
.close { padding: 4px 16px 0; }
.plus { width: 58px; background: #bcbcbc; margin-top: 5px; }
.account { display: flex; align-items: center; gap: 34px; padding: 0 30px 0 24px; }
.avatar { width: 48px; height: 48px; margin-left: 4px; border-radius: 50%; background: #f4f4f4; font-size: 25px; }

.ribbon { height: 165px; padding-bottom: 6px; display: flex; background: linear-gradient(#f0f0f0 162px, #fff 162px, #fff 167px, #d8d8d8 167px); }
.workspace { width: 220px; height: 122px; margin: 20px 0 0 24px; border: 2px solid #cfcfcf; border-radius: 8px; font-weight: 600; gap: 12px; }
.tabs { display: flex; padding-left: 32px; height: 50px; }
.tabs button { position: relative; padding: 7px 24px 0; margin-right: 44px; align-items: flex-start; }
.tabs .active { color: #0a7fb8; }
.tabs .active::after { content: ""; position: absolute; left: 0; right: 0; bottom: 1px; height: 6px; background: #0c84c6; }
.groups { display: flex; margin-left: 6px; }
.group { box-sizing: border-box; height: 104px; margin-top: 3px; border-right: 2px solid #c8c8c8; display: flex; flex-direction: column; align-items: center; }
.group:last-child { border-right: 0; }
.icons { display: flex; height: 66px; padding: 2px 0 0 3px; }
.tool { width: 86px; }
.tool svg { width: 64px; height: 64px; }
.select svg { width: 78px; height: 78px; }
.menu { margin-top: 7px; gap: 5px; }

.viewport { position: relative; flex: 1; min-height: 1200px; overflow: hidden; display: flex; flex-direction: column; justify-content: space-between; padding: 7px 8px 9px; border-top: 1px solid #3b3b3b; box-sizing: border-box; align-items: flex-start; }
.scene { position: absolute; inset: 0; width: 100%; height: 100%; }
.scale text { font-family: "Liberation Sans", sans-serif; font-size: 23px; fill: #bdb6d4; text-anchor: middle; dominant-baseline: central; }
.cube text { font-size: 22px; fill: #707070; text-anchor: middle; dominant-baseline: central; }
.cube .x { fill: #a02b3b; font-weight: 700; font-size: 26px; }
.cube .z { fill: #2c2ca8; font-weight: 700; font-size: 26px; }
.browser { position: relative; }
.panel { position: relative; box-sizing: border-box; width: 600px; height: 50px; background: #f0f0f0; border: 2px solid #fff; box-shadow: 0 0 0 2px #4a4a4a, 0 6px 0 #4a4a4a; display: flex; align-items: center; padding: 0 22px 0 10px; color: #555; }
.panel span { flex: 1; margin-left: 18px; }
.comments span { margin-left: 38px; }
.tree { list-style: none; margin: 9px 0 0; padding: 0; display: flex; flex-direction: column; gap: 8px; font-size: 23px; }
.tree li { display: flex; align-items: center; height: 40px; }
.depth0 { padding-left: 36px; }
.depth1 { padding-left: 72px; }
.depth2 { padding-left: 108px; }
.exp { width: 16px; height: 24px; margin-right: 20px; }
.row { box-sizing: border-box; height: 40px; display: flex; align-items: center; background: #f0f0f0; border-top: 2px solid #fff; padding: 0 22px 0 5px; gap: 19px; box-shadow: 0 4px 0 #555; }
.ic { width: 32px; height: 32px; }
.text { margin-left: 9px; }
.text.gear { margin-left: 3px; }
.root { padding-right: 14px; gap: 9px; }
.root .ic { width: 34px; }
.name { display: flex; align-items: center; background: #939393; height: 32px; width: 252px; box-sizing: border-box; padding-left: 5px; color: #fff; }
.name b { flex: 1; text-align: center; font-weight: 700; }
.root input { appearance: none; margin: 0; width: 28px; height: 28px; border: 2px solid #555; border-radius: 50%; background: radial-gradient(#444 5px, #fff 6px); }
.navbar { position: absolute; left: 50%; bottom: 12px; margin-left: -236px; width: 474px; height: 50px; box-sizing: border-box; background: #f0f0f0; border-top: 2px solid #fff; box-shadow: 0 0 0 2px #4f4a66; display: flex; align-items: center; justify-content: space-between; padding: 0 7px; }
.navbar svg { width: 32px; height: 32px; }
.navbar button { gap: 4px; }
.assist { position: absolute; right: 25px; bottom: 10px; }

.timeline { height: 101px; background: linear-gradient(#c4c4cc, #fff 8px, #f0f0f0 10px); display: flex; align-items: flex-start; }
.play { display: flex; gap: 26px; padding: 42px 0 0 21px; }
.play svg { width: 24px; height: 24px; fill: #5c5c5c; overflow: visible; }
.track { flex: 1; display: flex; margin-left: 38px; padding-top: 27px; }
.step { position: relative; width: 48px; height: 60px; flex: none; display: flex; justify-content: center; padding-top: 9px; box-sizing: border-box; border-bottom: 2px solid #c0c0c0; }
.step svg { width: 34px; height: 34px; }
.step i { position: absolute; left: 23px; bottom: 0; width: 2px; height: 12px; background: #c0c0c0; }
.step.first { padding-top: 0; }
.step.first svg { width: 46px; height: 48px; }
.step.first i { left: 12px; bottom: -10px; width: 18px; height: 20px; background: linear-gradient(#fff, #fff) center / 12px 3px no-repeat, linear-gradient(#fff, #fff) center / 3px 12px no-repeat, #777; }
.marker { margin: -5px 0 0 -12px; position: relative; }
.settings { margin: 36px 26px 0 0; }
</style>
